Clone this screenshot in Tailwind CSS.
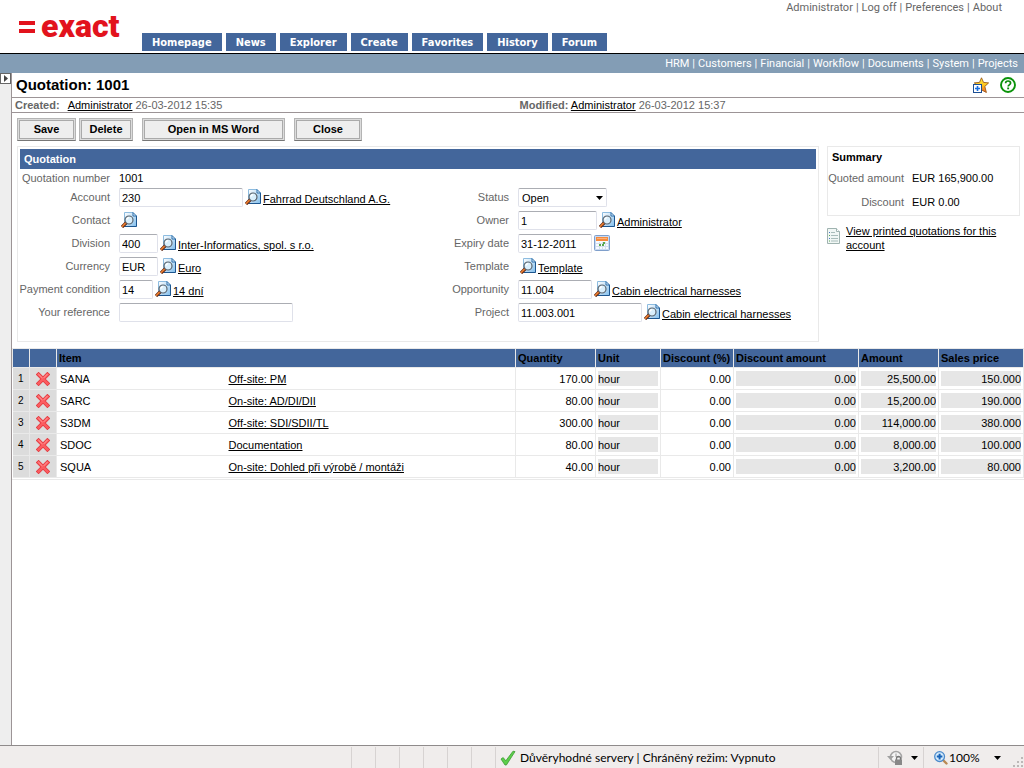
<!DOCTYPE html>
<html lang="en">
<head>
    <meta charset="UTF-8">
    <meta name="viewport" content="width=device-width, initial-scale=1.0">
    <title>Quotation: 1001</title>
    <script src="https://cdn.jsdelivr.net/npm/@tailwindcss/browser@4"></script>
</head>
<body class="h-screen flex flex-col bg-white text-black text-[11px] leading-[14px] font-['Liberation_Sans',Arial,sans-serif]">

    <!-- Shared icons -->
    <svg class="absolute w-0 h-0" aria-hidden="true">
        <linearGradient id="page-fill" x1="0" y1="0" x2="1" y2="1">
            <stop offset="0" stop-color="#ffffff"/><stop offset="1" stop-color="#7fbdec"/>
        </linearGradient>
        <linearGradient id="star-fill" x1="0" y1="0" x2="0" y2="1">
            <stop offset="0" stop-color="#fff04a"/><stop offset=".5" stop-color="#fdc51c"/><stop offset="1" stop-color="#f0622c"/>
        </linearGradient>
        <symbol id="icon-lookup" viewBox="0 0 16 16">
            <path d="M3.5.5h8.5l3.5 3.5v11h-12z" fill="url(#page-fill)"/>
            <path d="M3.5 15V.5H12" fill="none" stroke="#8dbce0"/>
            <path d="M3.5 14.5h12V4" fill="none" stroke="#1d568f"/>
            <path d="M12 .5v3.5h3.5z" fill="#e8f5ff" stroke="#2a6ca8"/>
            <circle cx="8" cy="8" r="4" fill="#d9effc" stroke="#59646e" stroke-width="1.2"/>
            <path d="M5.9 7.8a2.3 2.3 0 0 1 2.3-2.1" fill="none" stroke="#fff" stroke-width="1.2"/>
            <path d="M5 11L1 15" stroke="#5a2412" stroke-width="3.2"/>
            <path d="M4.6 11.1L1 14.7" stroke="#f08030" stroke-width="1.6"/>
        </symbol>
        <symbol id="icon-delete" viewBox="0 0 14 14">
            <path d="M2.6 2.6l8.8 8.8M11.4 2.6l-8.8 8.8" stroke="#e0383e" stroke-width="4" stroke-linecap="square"/>
            <path d="M2.6 2.6l8.8 8.8M11.4 2.6l-8.8 8.8" stroke="#fb5c60" stroke-width="2.6" stroke-linecap="square"/>
            <path d="M2.6 2.3l3.6 3.5M11.2 2.3L8 5.6" stroke="#ff9a9a" stroke-width="1" stroke-linecap="round"/>
        </symbol>
    </svg>

    <header>
        <div class="flex justify-between h-[53px] border-b border-white">
            <div class="flex">
                <a href="#" aria-label="exact" class="flex items-start w-[142px] pl-[19px] text-[#e2131d]">
                    <svg class="w-4 h-3 mt-[21px] mr-1.5" viewBox="0 0 16 12" fill="currentColor">
                        <rect width="16" height="4"/><rect y="8" width="16" height="4"/>
                    </svg>
                    <span class="mt-2 text-[32px] leading-[36px] font-black font-['Roboto',sans-serif]">exact</span>
                </a>
                <nav class="flex items-end gap-1 pb-px text-white font-bold font-['DejaVu_Sans_Condensed','DejaVu_Sans',sans-serif]">
                    <a href="#" class="bg-[#43669b] px-2.5 h-[18px] leading-[20px]">Homepage</a>
                    <a href="#" class="bg-[#43669b] px-2.5 h-[18px] leading-[20px]">News</a>
                    <a href="#" class="bg-[#43669b] px-2.5 h-[18px] leading-[20px]">Explorer</a>
                    <a href="#" class="bg-[#43669b] px-2.5 h-[18px] leading-[20px]">Create</a>
                    <a href="#" class="bg-[#43669b] px-2.5 h-[18px] leading-[20px]">Favorites</a>
                    <a href="#" class="bg-[#43669b] px-2.5 h-[18px] leading-[20px]">History</a>
                    <a href="#" class="bg-[#43669b] px-2.5 h-[18px] leading-[20px]">Forum</a>
                </nav>
            </div>
            <div class="flex gap-[3px] pt-px pr-[22px] text-[#666] font-['Roboto',sans-serif]">
                <a href="#">Administrator</a><span>|</span>
                <a href="#">Log off</a><span>|</span>
                <a href="#">Preferences</a><span>|</span>
                <a href="#">About</a>
            </div>
        </div>
        <nav class="flex justify-end gap-[3px] h-5 pr-1.5 pt-[3px] border-t border-black bg-[#839db5] text-white font-['Roboto',sans-serif]">
            <a href="#">HRM</a><span>|</span>
            <a href="#">Customers</a><span>|</span>
            <a href="#">Financial</a><span>|</span>
            <a href="#">Workflow</a><span>|</span>
            <a href="#">Documents</a><span>|</span>
            <a href="#">System</a><span>|</span>
            <a href="#">Projects</a>
        </nav>
    </header>

    <div class="flex-1 flex min-h-0">
        <!-- Collapsed side menu -->
        <aside class="w-3 shrink-0 bg-[#eee] border-r border-[#9c9496]">
            <button type="button" aria-label="Show menu" class="block w-[11px] h-[11px] border border-[#666] bg-white">
                <svg class="w-[9px] h-[9px]" viewBox="0 0 9 9"><path d="M3 1l4 3.5L3 8z" fill="#444"/></svg>
            </button>
        </aside>

        <main class="flex-1 min-w-0">
            <div class="flex items-center justify-between h-6 pl-1 pr-2">
                <h1 class="text-[15px] leading-[20px] font-bold">Quotation: 1001</h1>
                <div class="flex gap-[11px]">
                    <button type="button" aria-label="Add to favorites">
                        <svg class="w-4 h-4" viewBox="0 0 16 16">
                            <path d="M8.5.8l2 4.6 5.1.5-3.8 3.5 1.6 6.1-4.9-2.6L4 15.3l1.2-5.9L1.3 5.9l5.2-.5z" fill="url(#star-fill)" stroke="#9a5a18" stroke-width=".9"/>
                            <rect x=".5" y="7.5" width="8" height="8" fill="#fff" stroke="#1c4f94"/>
                            <path d="M4.5 9v5M2 11.5h5" stroke="#1a6fe0" stroke-width="1.6"/>
                        </svg>
                    </button>
                    <button type="button" aria-label="Help">
                        <svg class="w-4 h-4" viewBox="0 0 16 16" fill="none">
                            <circle cx="8" cy="8" r="7" fill="#fff" stroke="#0a930a" stroke-width="1.9"/>
                            <path d="M5.6 6.3c0-3.1 5-3 5-.2 0 1.8-2.4 1.8-2.4 3.4" stroke="#0a8a0a" stroke-width="1.7"/>
                            <rect x="7.2" y="10.5" width="1.9" height="1.8" fill="#0a8a0a"/>
                        </svg>
                    </button>
                </div>
            </div>

            <div class="grid grid-cols-2 h-4 pl-[3px] border-y border-[#9c9496] text-[#666]">
                <p><b class="mr-1.5">Created:</b><a href="#" class="ml-0.5 text-black underline">Administrator</a> 26-03-2012 15:35</p>
                <p><b>Modified:</b> <a href="#" class="text-black underline">Administrator</a> 26-03-2012 15:37</p>
            </div>

            <div class="flex pt-[5px] pl-[5px] font-bold">
                <button type="button" class="w-[59px] h-[23px] pb-0.5 mr-[3px] border border-[#b4b4b4] border-b-[#777] bg-[#eee] shadow-[inset_0_0_0_1px_#dcdcdc,inset_0_0_0_2px_#aaa]">Save</button>
                <button type="button" class="w-[54px] h-[23px] pb-0.5 mr-[9px] border border-[#b4b4b4] border-b-[#777] bg-[#eee] shadow-[inset_0_0_0_1px_#dcdcdc,inset_0_0_0_2px_#aaa]">Delete</button>
                <button type="button" class="w-[143px] h-[23px] pb-0.5 mr-[9px] border border-[#b4b4b4] border-b-[#777] bg-[#eee] shadow-[inset_0_0_0_1px_#dcdcdc,inset_0_0_0_2px_#aaa]">Open in MS Word</button>
                <button type="button" class="w-[68px] h-[23px] pb-0.5 border border-[#b4b4b4] border-b-[#777] bg-[#eee] shadow-[inset_0_0_0_1px_#dcdcdc,inset_0_0_0_2px_#aaa]">Close</button>
            </div>

            <div class="flex items-start gap-2 pt-[5px] pl-[5px] pr-1">
                <!-- Quotation form -->
                <form class="flex-1 min-w-0 border border-[#e9e9e9] p-0.5 pb-[17px]">
                    <h2 class="h-5 px-1 leading-[20px] font-bold text-white bg-[#43669b]">Quotation</h2>
                    <div class="grid grid-cols-2">
                        <div>
                            <div class="flex items-center h-[17px]">
                                <span class="w-[90px] mr-[9px] text-right whitespace-nowrap text-[#666]">Quotation number</span>
                                <span>1001</span>
                            </div>
                            <div class="flex items-center h-[23px]">
                                <label for="account" class="w-[90px] mr-[9px] pb-0.5 text-right text-[#666]">Account</label>
                                <input id="account" type="text" value="230" class="w-[124px] h-[19px] px-0.5 border border-[#dfe1ea] border-t-[#abadb3] rounded-xs">
                                <button type="button" aria-label="Look up account" class="mx-0.5 pb-0.5"><svg class="w-4 h-4"><use href="#icon-lookup"/></svg></button>
                                <a href="#" class="pt-[3px] underline">Fahrrad Deutschland A.G.</a>
                            </div>
                            <div class="flex items-center h-[23px]">
                                <span class="w-[90px] mr-[9px] pb-0.5 text-right text-[#666]">Contact</span>
                                <button type="button" aria-label="Look up contact" class="mx-0.5 pb-0.5"><svg class="w-4 h-4"><use href="#icon-lookup"/></svg></button>
                            </div>
                            <div class="flex items-center h-[23px]">
                                <label for="division" class="w-[90px] mr-[9px] pb-0.5 text-right text-[#666]">Division</label>
                                <input id="division" type="text" value="400" class="w-[39px] h-[19px] px-0.5 border border-[#dfe1ea] border-t-[#abadb3] rounded-xs">
                                <button type="button" aria-label="Look up division" class="mx-0.5 pb-0.5"><svg class="w-4 h-4"><use href="#icon-lookup"/></svg></button>
                                <a href="#" class="pt-[3px] underline">Inter-Informatics, spol. s r.o.</a>
                            </div>
                            <div class="flex items-center h-[23px]">
                                <label for="currency" class="w-[90px] mr-[9px] pb-0.5 text-right text-[#666]">Currency</label>
                                <input id="currency" type="text" value="EUR" class="w-[39px] h-[19px] px-0.5 border border-[#dfe1ea] border-t-[#abadb3] rounded-xs">
                                <button type="button" aria-label="Look up currency" class="mx-0.5 pb-0.5"><svg class="w-4 h-4"><use href="#icon-lookup"/></svg></button>
                                <a href="#" class="pt-[3px] underline">Euro</a>
                            </div>
                            <div class="flex items-center h-[23px]">
                                <label for="payment" class="flex justify-end w-[90px] mr-[9px] pb-0.5 whitespace-nowrap text-[#666]">Payment condition</label>
                                <input id="payment" type="text" value="14" class="w-[34px] h-[19px] px-0.5 border border-[#dfe1ea] border-t-[#abadb3] rounded-xs">
                                <button type="button" aria-label="Look up payment condition" class="mx-0.5 pb-0.5"><svg class="w-4 h-4"><use href="#icon-lookup"/></svg></button>
                                <a href="#" class="pt-[3px] underline">14 dní</a>
                            </div>
                            <div class="flex items-center h-[23px]">
                                <label for="reference" class="w-[90px] mr-[9px] pb-0.5 text-right text-[#666]">Your reference</label>
                                <input id="reference" type="text" class="w-[174px] h-[19px] px-0.5 border border-[#dfe1ea] border-t-[#abadb3] rounded-xs">
                            </div>
                        </div>

                        <div class="pt-[17px]">
                            <div class="flex items-center h-[23px]">
                                <label for="status" class="w-[91px] mr-[9px] pb-0.5 text-right text-[#666]">Status</label>
                                <div class="relative">
                                    <select id="status" class="block appearance-none w-[89px] h-[19px] px-[3px] border border-[#dfe1ea] border-t-[#abadb3] rounded-xs">
                                        <option>Open</option>
                                    </select>
                                    <svg class="absolute right-1 top-2 w-[7px] h-1 pointer-events-none" viewBox="0 0 7 4"><path d="M0 0h7L3.5 4z"/></svg>
                                </div>
                            </div>
                            <div class="flex items-center h-[23px]">
                                <label for="owner" class="w-[91px] mr-[9px] pb-0.5 text-right text-[#666]">Owner</label>
                                <input id="owner" type="text" value="1" class="w-[79px] h-[19px] px-0.5 border border-[#dfe1ea] border-t-[#abadb3] rounded-xs">
                                <button type="button" aria-label="Look up owner" class="mx-0.5 pb-0.5"><svg class="w-4 h-4"><use href="#icon-lookup"/></svg></button>
                                <a href="#" class="pt-[3px] underline">Administrator</a>
                            </div>
                            <div class="flex items-center h-[23px]">
                                <label for="expiry" class="w-[91px] mr-[9px] pb-0.5 text-right text-[#666]">Expiry date</label>
                                <input id="expiry" type="text" value="31-12-2011" class="w-[74px] h-[19px] px-0.5 border border-[#dfe1ea] border-t-[#abadb3] rounded-xs">
                                <button type="button" aria-label="Pick date" class="mx-0.5 pb-0.5">
                                    <svg class="w-4 h-4" viewBox="0 0 16 16">
                                        <rect x=".5" y=".5" width="15" height="15" rx="1" fill="#c8daf2" stroke="#7f9fcb"/>
                                        <rect x="2" y="2" width="12" height="12" fill="#f6faff"/>
                                        <rect x="2" y="2" width="12" height="4" fill="#f58a3c"/>
                                        <path d="M3 3.5h10" stroke="#fbb27a"/>
                                        <path d="M5.5 7v7M8.5 7v7M11.5 7v7M2 8.5h12M2 11.5h12" stroke="#d5dfec"/>
                                        <path d="M9 7h2v2H9zM5 9h2v2H5zM8 9h2v2H8z" fill="#58a84e"/>
                                    </svg>
                                </button>
                            </div>
                            <div class="flex items-center h-[23px]">
                                <span class="w-[91px] mr-[9px] pb-0.5 text-right text-[#666]">Template</span>
                                <button type="button" aria-label="Look up template" class="mx-0.5 pb-0.5"><svg class="w-4 h-4"><use href="#icon-lookup"/></svg></button>
                                <a href="#" class="pt-[3px] underline">Template</a>
                            </div>
                            <div class="flex items-center h-[23px]">
                                <label for="opportunity" class="w-[91px] mr-[9px] pb-0.5 text-right text-[#666]">Opportunity</label>
                                <input id="opportunity" type="text" value="11.004" class="w-[74px] h-[19px] px-0.5 border border-[#dfe1ea] border-t-[#abadb3] rounded-xs">
                                <button type="button" aria-label="Look up opportunity" class="mx-0.5 pb-0.5"><svg class="w-4 h-4"><use href="#icon-lookup"/></svg></button>
                                <a href="#" class="pt-[3px] underline">Cabin electrical harnesses</a>
                            </div>
                            <div class="flex items-center h-[23px]">
                                <label for="project" class="w-[91px] mr-[9px] pb-0.5 text-right text-[#666]">Project</label>
                                <input id="project" type="text" value="11.003.001" class="w-[124px] h-[19px] px-0.5 border border-[#dfe1ea] border-t-[#abadb3] rounded-xs">
                                <button type="button" aria-label="Look up project" class="mx-0.5 pb-0.5"><svg class="w-4 h-4"><use href="#icon-lookup"/></svg></button>
                                <a href="#" class="pt-[3px] underline">Cabin electrical harnesses</a>
                            </div>
                        </div>
                    </div>
                </form>

                <!-- Summary -->
                <aside class="w-[193px] shrink-0">
                    <section class="h-[70px] border border-[#e9e9e9] pt-[3px]">
                        <h2 class="pl-1 font-bold">Summary</h2>
                        <dl class="grid grid-cols-[76px_1fr] gap-x-2 gap-y-2.5 pt-[7px]">
                            <dt class="text-right whitespace-nowrap text-[#666]">Quoted amount</dt>
                            <dd>EUR 165,900.00</dd>
                            <dt class="text-right text-[#666]">Discount</dt>
                            <dd>EUR 0.00</dd>
                        </dl>
                    </section>
                    <a href="#" class="flex gap-1.5 pt-2 underline">
                        <svg class="w-[13px] h-4 mt-1 shrink-0" viewBox="0 0 13 16">
                            <path d="M.5.5h9l3 3v12H.5z" fill="#f1f7f5" stroke="#9fb3b0"/>
                            <path d="M9.5.5v3h3" fill="#fff" stroke="#9fb3b0"/>
                            <path d="M4 4.5h4M4 7.5h7M4 10.5h7M4 13h7" stroke="#a9bdbb"/>
                            <path d="M2 4.5h1M2 10.5h1" stroke="#4878c8"/><path d="M2 7.5h1M2 13h1" stroke="#58a84e"/>
                        </svg>
                        <span class="pr-4">View printed quotations for this account</span>
                    </a>
                </aside>
            </div>

            <!-- Quotation lines -->
            <div class="mt-1.5 pb-px border-b border-[#e9e9e9]">
                <table class="w-full table-fixed border-collapse">
                    <colgroup>
                        <col class="w-[17px]"><col class="w-[27px]"><col class="w-[170px]"><col>
                        <col class="w-[80px]"><col class="w-[65px]"><col class="w-[73px]">
                        <col class="w-[125px]"><col class="w-[80px]"><col class="w-[85px]">
                    </colgroup>
                    <thead>
                        <tr class="h-[19px] bg-[#43669b] text-left whitespace-nowrap *:border *:border-[#e9e9e9] *:pl-0.5">
                            <th></th>
                            <th></th>
                            <th colspan="2">Item</th>
                            <th>Quantity</th>
                            <th>Unit</th>
                            <th>Discount (%)</th>
                            <th>Discount amount</th>
                            <th>Amount</th>
                            <th>Sales price</th>
                        </tr>
                    </thead>
                    <tbody>
                        <tr class="h-[22px] *:border-b *:border-[#e9e9e9]">
                            <td class="bg-[#dcdcdc] text-center text-[10px] border-r">1</td>
                            <td class="bg-[#dcdcdc] border-r"><button type="button" aria-label="Delete line 1" class="block mx-auto"><svg class="w-3.5 h-3.5"><use href="#icon-delete"/></svg></button></td>
                            <td class="pl-[3px]">SANA</td>
                            <td class="pl-0.5"><a href="#" class="underline">Off-site: PM</a></td>
                            <td class="px-0.5 border-l"><input type="text" aria-label="Quantity" value="170.00" class="block w-full h-[15px] text-right"></td>
                            <td class="px-0.5 border-l"><input type="text" aria-label="Unit" value="hour" readonly class="block w-full h-[15px] bg-[#e6e6e6]"></td>
                            <td class="px-0.5 border-l"><input type="text" aria-label="Discount (%)" value="0.00" class="block w-full h-[15px] text-right"></td>
                            <td class="px-0.5 border-l"><input type="text" aria-label="Discount amount" value="0.00" readonly class="block w-full h-[15px] text-right bg-[#e6e6e6]"></td>
                            <td class="px-0.5 border-l"><input type="text" aria-label="Amount" value="25,500.00" readonly class="block w-full h-[15px] text-right bg-[#e6e6e6]"></td>
                            <td class="px-0.5 border-x"><input type="text" aria-label="Sales price" value="150.000" readonly class="block w-full h-[15px] text-right bg-[#e6e6e6]"></td>
                        </tr>
                        <tr class="h-[22px] *:border-b *:border-[#e9e9e9]">
                            <td class="bg-[#dcdcdc] text-center text-[10px] border-r">2</td>
                            <td class="bg-[#dcdcdc] border-r"><button type="button" aria-label="Delete line 2" class="block mx-auto"><svg class="w-3.5 h-3.5"><use href="#icon-delete"/></svg></button></td>
                            <td class="pl-[3px]">SARC</td>
                            <td class="pl-0.5"><a href="#" class="underline">On-site: AD/DI/DII</a></td>
                            <td class="px-0.5 border-l"><input type="text" aria-label="Quantity" value="80.00" class="block w-full h-[15px] text-right"></td>
                            <td class="px-0.5 border-l"><input type="text" aria-label="Unit" value="hour" readonly class="block w-full h-[15px] bg-[#e6e6e6]"></td>
                            <td class="px-0.5 border-l"><input type="text" aria-label="Discount (%)" value="0.00" class="block w-full h-[15px] text-right"></td>
                            <td class="px-0.5 border-l"><input type="text" aria-label="Discount amount" value="0.00" readonly class="block w-full h-[15px] text-right bg-[#e6e6e6]"></td>
                            <td class="px-0.5 border-l"><input type="text" aria-label="Amount" value="15,200.00" readonly class="block w-full h-[15px] text-right bg-[#e6e6e6]"></td>
                            <td class="px-0.5 border-x"><input type="text" aria-label="Sales price" value="190.000" readonly class="block w-full h-[15px] text-right bg-[#e6e6e6]"></td>
                        </tr>
                        <tr class="h-[22px] *:border-b *:border-[#e9e9e9]">
                            <td class="bg-[#dcdcdc] text-center text-[10px] border-r">3</td>
                            <td class="bg-[#dcdcdc] border-r"><button type="button" aria-label="Delete line 3" class="block mx-auto"><svg class="w-3.5 h-3.5"><use href="#icon-delete"/></svg></button></td>
                            <td class="pl-[3px]">S3DM</td>
                            <td class="pl-0.5"><a href="#" class="underline">Off-site: SDI/SDII/TL</a></td>
                            <td class="px-0.5 border-l"><input type="text" aria-label="Quantity" value="300.00" class="block w-full h-[15px] text-right"></td>
                            <td class="px-0.5 border-l"><input type="text" aria-label="Unit" value="hour" readonly class="block w-full h-[15px] bg-[#e6e6e6]"></td>
                            <td class="px-0.5 border-l"><input type="text" aria-label="Discount (%)" value="0.00" class="block w-full h-[15px] text-right"></td>
                            <td class="px-0.5 border-l"><input type="text" aria-label="Discount amount" value="0.00" readonly class="block w-full h-[15px] text-right bg-[#e6e6e6]"></td>
                            <td class="px-0.5 border-l"><input type="text" aria-label="Amount" value="114,000.00" readonly class="block w-full h-[15px] text-right bg-[#e6e6e6]"></td>
                            <td class="px-0.5 border-x"><input type="text" aria-label="Sales price" value="380.000" readonly class="block w-full h-[15px] text-right bg-[#e6e6e6]"></td>
                        </tr>
                        <tr class="h-[22px] *:border-b *:border-[#e9e9e9]">
                            <td class="bg-[#dcdcdc] text-center text-[10px] border-r">4</td>
                            <td class="bg-[#dcdcdc] border-r"><button type="button" aria-label="Delete line 4" class="block mx-auto"><svg class="w-3.5 h-3.5"><use href="#icon-delete"/></svg></button></td>
                            <td class="pl-[3px]">SDOC</td>
                            <td class="pl-0.5"><a href="#" class="underline">Documentation</a></td>
                            <td class="px-0.5 border-l"><input type="text" aria-label="Quantity" value="80.00" class="block w-full h-[15px] text-right"></td>
                            <td class="px-0.5 border-l"><input type="text" aria-label="Unit" value="hour" readonly class="block w-full h-[15px] bg-[#e6e6e6]"></td>
                            <td class="px-0.5 border-l"><input type="text" aria-label="Discount (%)" value="0.00" class="block w-full h-[15px] text-right"></td>
                            <td class="px-0.5 border-l"><input type="text" aria-label="Discount amount" value="0.00" readonly class="block w-full h-[15px] text-right bg-[#e6e6e6]"></td>
                            <td class="px-0.5 border-l"><input type="text" aria-label="Amount" value="8,000.00" readonly class="block w-full h-[15px] text-right bg-[#e6e6e6]"></td>
                            <td class="px-0.5 border-x"><input type="text" aria-label="Sales price" value="100.000" readonly class="block w-full h-[15px] text-right bg-[#e6e6e6]"></td>
                        </tr>
                        <tr class="h-[22px] *:border-b *:border-[#e9e9e9]">
                            <td class="bg-[#dcdcdc] text-center text-[10px] border-r">5</td>
                            <td class="bg-[#dcdcdc] border-r"><button type="button" aria-label="Delete line 5" class="block mx-auto"><svg class="w-3.5 h-3.5"><use href="#icon-delete"/></svg></button></td>
                            <td class="pl-[3px]">SQUA</td>
                            <td class="pl-0.5"><a href="#" class="underline">On-site: Dohled při výrobě / montáži</a></td>
                            <td class="px-0.5 border-l"><input type="text" aria-label="Quantity" value="40.00" class="block w-full h-[15px] text-right"></td>
                            <td class="px-0.5 border-l"><input type="text" aria-label="Unit" value="hour" readonly class="block w-full h-[15px] bg-[#e6e6e6]"></td>
                            <td class="px-0.5 border-l"><input type="text" aria-label="Discount (%)" value="0.00" class="block w-full h-[15px] text-right"></td>
                            <td class="px-0.5 border-l"><input type="text" aria-label="Discount amount" value="0.00" readonly class="block w-full h-[15px] text-right bg-[#e6e6e6]"></td>
                            <td class="px-0.5 border-l"><input type="text" aria-label="Amount" value="3,200.00" readonly class="block w-full h-[15px] text-right bg-[#e6e6e6]"></td>
                            <td class="px-0.5 border-x"><input type="text" aria-label="Sales price" value="80.000" readonly class="block w-full h-[15px] text-right bg-[#e6e6e6]"></td>
                        </tr>
                    </tbody>
                </table>
            </div>
        </main>
    </div>

    <!-- Status bar -->
    <footer class="flex h-[23px] pt-px border-t border-[#8f8b8b] bg-[#f0edec] text-[12px] leading-[16px] font-['Lato',sans-serif]">
        <div class="flex-1"></div>
        <div class="w-6 border-l border-[#d7d3d2]"></div>
        <div class="w-6 border-l border-[#d7d3d2]"></div>
        <div class="w-6 border-l border-[#d7d3d2]"></div>
        <div class="w-6 border-l border-[#d7d3d2]"></div>
        <div class="w-6 border-l border-[#d7d3d2]"></div>
        <div class="w-6 border-l border-[#d7d3d2]"></div>
        <div class="flex items-center gap-1 w-[383px] pl-1 border-l border-[#d7d3d2]">
            <svg class="w-4 h-4" viewBox="0 0 16 16">
                <path d="M1 9l2.2-1.4 2.6 3.2L13 1.2l2 .4L6.4 15H5z" fill="#5ccf4a" stroke="#3c9a34" stroke-width=".8"/>
            </svg>
            <span>Důvěryhodné servery | Chráněný režim: Vypnuto</span>
        </div>
        <button type="button" aria-label="Privacy" class="flex items-center gap-2 w-[45px] pl-2 border-l border-[#d7d3d2]">
            <svg class="w-4 h-4" viewBox="0 0 16 16">
                <circle cx="9" cy="7" r="5.5" fill="#f4f4f4" stroke="#a5a5a5" stroke-width="1.5"/>
                <path d="M9 3.5V7h3" fill="none" stroke="#999"/>
                <path d="M0 6h7L3.5 10z" fill="#a0a0a0"/>
                <path d="M9.5 10V8.5a2 2 0 0 1 4 0V10" fill="none" stroke="#777" stroke-width="1.3"/>
                <rect x="8" y="9.5" width="7" height="5.5" fill="#888"/>
            </svg>
            <svg class="w-[7px] h-1" viewBox="0 0 7 4"><path d="M0 0h7L3.5 4z"/></svg>
        </button>
        <button type="button" class="flex items-center w-[82px] pl-2.5 border-l border-[#d7d3d2]">
            <svg class="w-3.5 h-3.5 mr-px" viewBox="0 0 14 14">
                <path d="M8.5 8.5l4 4" stroke="#b98a54" stroke-width="2.4" stroke-linecap="round"/>
                <circle cx="5.6" cy="5.6" r="4.9" fill="#d6ebfb" stroke="#4a8acb" stroke-width="1.3"/>
                <path d="M5.6 2.8v5.6M2.8 5.6h5.6" stroke="#1763b8" stroke-width="2"/>
            </svg>
            <span>100%</span>
            <svg class="w-[7px] h-1 ml-auto mr-1" viewBox="0 0 7 4"><path d="M0 0h7L3.5 4z"/></svg>
        </button>
        <div class="flex items-end w-[19px] pl-2">
            <svg class="w-[11px] h-[11px]" viewBox="0 0 11 11" fill="#bcb8b7">
                <path d="M8 0h2v2H8zM4 4h2v2H4zM8 4h2v2H8zM0 8h2v2H0zM4 8h2v2H4zM8 8h2v2H8z"/>
            </svg>
        </div>
    </footer>
</body>
</html>
